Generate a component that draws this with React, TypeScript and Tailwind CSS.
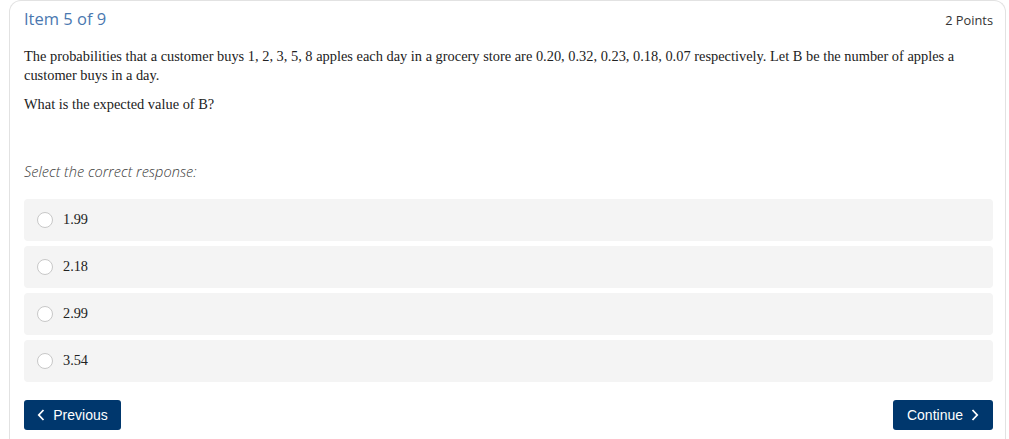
import React, { useState } from 'react';

const options = ['1.99', '2.18', '2.99', '3.54'];

export default function App() {
  const [selected, setSelected] = useState<string | null>(null);

  return (
    <div className="min-h-screen bg-white pl-[9px]">
      <div className="w-[997px] h-[460px] rounded-t-[12px] border border-b-0 border-[#e2e2e2] pl-[14px] pr-[12px] pt-[8px]">
        {/* Header */}
        <div className="flex items-baseline justify-between">
          <h2 className="text-[16.5px] leading-[20px] text-[#4a78b0]" style={{ fontFamily: '"Open Sans", sans-serif' }}>
            Item 5 of 9
          </h2>
          <span className="text-[12.8px] text-[#333]" style={{ fontFamily: '"Open Sans", sans-serif' }}>
            2 Points
          </span>
        </div>

        {/* Question */}
        <div className="mt-[17px] text-[14.4px] leading-[19px] text-[#222]" style={{ fontFamily: '"Liberation Serif", serif' }}>
          <p>
            The probabilities that a customer buys 1, 2, 3, 5, 8 apples each day in a grocery store are 0.20, 0.32, 0.23, 0.18, 0.07 respectively. Let B be the number of apples a customer buys in a day.
          </p>
          <p className="mt-[10px]">What is the expected value of B?</p>
        </div>

        <p className="mt-[47px] text-[14.6px] leading-[20px] font-light italic text-[#3a3a3a]" style={{ fontFamily: '"Open Sans", sans-serif' }}>
          Select the correct response:
        </p>

        {/* Options */}
        <div className="mt-[18px] flex flex-col gap-[5px]">
          {options.map((opt) => (
            <label
              key={opt}
              onClick={() => setSelected(opt)}
              className="flex h-[42px] cursor-pointer items-center rounded-[4px] bg-[#f4f4f4] pl-[13px]"
            >
              <span className="flex h-[16px] w-[16px] items-center justify-center rounded-full border border-[#c8c8c8] bg-white">
                {selected === opt && <span className="h-[8px] w-[8px] rounded-full bg-[#003a70]" />}
              </span>
              <span className="ml-[10px] text-[14.3px] text-[#222]" style={{ fontFamily: '"Liberation Serif", serif' }}>
                {opt}
              </span>
            </label>
          ))}
        </div>

        {/* Navigation */}
        <div className="mt-[18px] flex justify-between" style={{ fontFamily: '"Liberation Sans", sans-serif' }}>
          <button className="flex h-[30px] w-[97px] items-center justify-center gap-[8px] rounded-[3px] bg-[#00376d] text-[14px] text-white">
            <svg width="8" height="12" viewBox="0 0 8 12" fill="none">
              <path d="M6.5 1L1.8 6l4.7 5" stroke="white" strokeWidth="1.8" />
            </svg>
            Previous
          </button>
          <button className="flex h-[30px] w-[100px] items-center justify-center gap-[8px] rounded-[3px] bg-[#00376d] text-[14px] text-white">
            Continue
            <svg width="8" height="12" viewBox="0 0 8 12" fill="none">
              <path d="M1.5 1l4.7 5-4.7 5" stroke="white" strokeWidth="1.8" />
            </svg>
          </button>
        </div>
      </div>
    </div>
  );
}
